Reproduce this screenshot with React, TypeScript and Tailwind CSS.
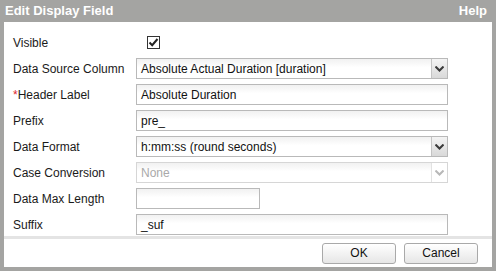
import React from "react";

const font = { fontFamily: '"Liberation Sans", Arial, sans-serif' };

function Chevron({ disabled }: { disabled?: boolean }) {
  return (
    <svg width="9" height="6" viewBox="0 0 9 6">
      <path
        d="M0.5 0.5 L4.5 4.5 L8.5 0.5"
        fill="none"
        stroke={disabled ? "#b8b8b8" : "#3a3a3a"}
        strokeWidth="2"
      />
    </svg>
  );
}

function TextBox({ value, width = "w-[312px]" }: { value?: string; width?: string }) {
  return (
    <div
      className={`${width} flex h-[21px] items-center border border-[#b9b9b9] bg-gradient-to-b from-[#f1f1f1] to-white to-[45%] px-[4px] text-[12px] text-[#111]`}
    >
      {value}
    </div>
  );
}

function Select({ value, disabled }: { value: string; disabled?: boolean }) {
  return (
    <div
      className={`flex h-[21px] w-[312px] items-stretch border ${
        disabled ? "border-[#d6d6d6]" : "border-[#b9b9b9]"
      } bg-gradient-to-b from-[#f1f1f1] to-white to-[45%] text-[12px]`}
    >
      <div className={`flex flex-1 items-center px-[4px] ${disabled ? "text-[#a9a9a9]" : "text-[#111]"}`}>
        {value}
      </div>
      <div
        className={`flex w-[16px] items-center justify-center border-l ${
          disabled ? "border-[#e2e2e2] bg-white" : "border-[#c4c4c4] bg-gradient-to-b from-[#f4f4f4] to-[#d9d9d9]"
        }`}
      >
        <Chevron disabled={disabled} />
      </div>
    </div>
  );
}

function Row({ label, required, children }: { label: string; required?: boolean; children: React.ReactNode }) {
  return (
    <div className="flex h-[21px] items-center">
      <div className="w-[123px] text-[12px] text-[#1a1a1a]">
        {required && <span className="text-[#e0262d]">*</span>}
        {label}
      </div>
      {children}
    </div>
  );
}

function Button({ label }: { label: string }) {
  return (
    <button className="h-[21px] w-[74px] rounded-[3px] border border-[#a9a9a9] bg-gradient-to-b from-white to-[#e6e6e6] text-[12px] text-[#111]">
      {label}
    </button>
  );
}

export default function App() {
  return (
    <div className="flex h-[271px] w-[496px] flex-col bg-[#a4a4a2] px-[4px] pb-[4px]" style={font}>
      {/* Title bar */}
      <div className="flex h-[22px] items-center justify-between px-[1px] pr-[5px] text-[13px] font-bold text-white">
        <span>Edit Display Field</span>
        <span>Help</span>
      </div>

      <div className="flex flex-1 flex-col bg-white">
        {/* Form */}
        <div className="flex flex-1 flex-col gap-[5px] pl-[9px] pt-[10px]">
          <Row label="Visible">
            <div className="ml-[11px] flex h-[13px] w-[13px] items-center justify-center border border-[#333] bg-white">
              <svg width="11" height="11" viewBox="0 0 11 11">
                <path d="M1.5 5.5 L4.2 8.2 L9.5 2" fill="none" stroke="#222" strokeWidth="2" />
              </svg>
            </div>
          </Row>
          <Row label="Data Source Column">
            <Select value="Absolute Actual Duration [duration]" />
          </Row>
          <Row label="Header Label" required>
            <TextBox value="Absolute Duration" />
          </Row>
          <Row label="Prefix">
            <TextBox value="pre_" />
          </Row>
          <Row label="Data Format">
            <Select value="h:mm:ss (round seconds)" />
          </Row>
          <Row label="Case Conversion">
            <Select value="None" disabled />
          </Row>
          <Row label="Data Max Length">
            <TextBox width="w-[124px]" />
          </Row>
          <Row label="Suffix">
            <TextBox value="_suf" />
          </Row>
        </div>

        {/* Footer */}
        <div className="flex h-[31px] items-center justify-end gap-[8px] border-t-[3px] border-[#e4e4e4] pr-[14px]">
          <Button label="OK" />
          <Button label="Cancel" />
        </div>
      </div>
    </div>
  );
}
